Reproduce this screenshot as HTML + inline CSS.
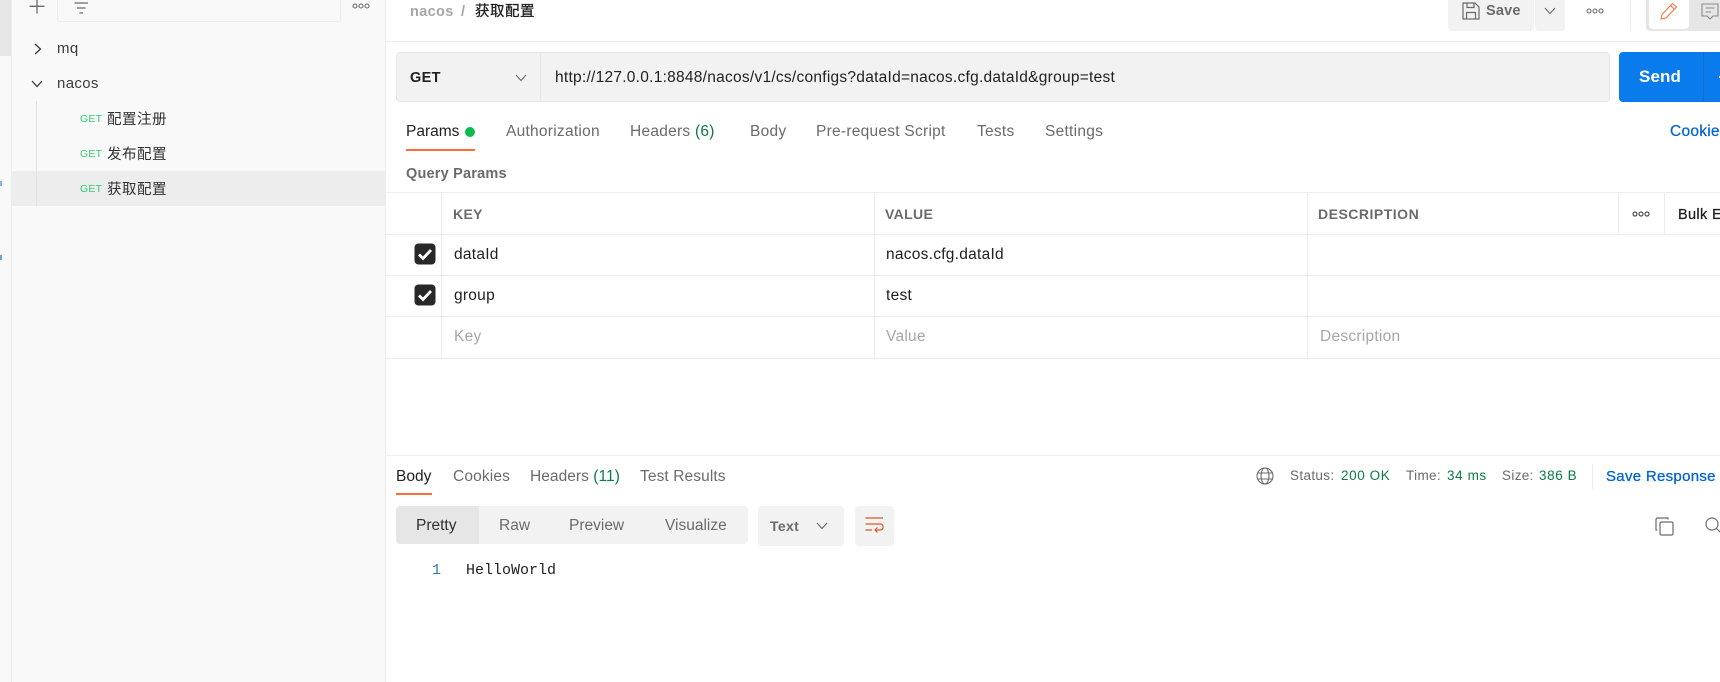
<!DOCTYPE html>
<html><head><meta charset="utf-8">
<style>
html,body{margin:0;padding:0;width:1720px;height:682px;overflow:hidden;background:#fff}
body{position:relative;font-family:"Liberation Sans","Noto Sans CJK SC",sans-serif;font-size:15.5px;color:#212121}
.a{position:absolute}
.t{position:absolute;white-space:nowrap;line-height:20px;height:20px;letter-spacing:.26px}
.s{font-size:14.5px;letter-spacing:.35px}
.g{color:#6b6b6b}
.b{font-weight:700}
.n{color:#0a7c42}
.l{position:absolute;background:#ededed}
.ph{color:#a6a6a6}
svg{position:absolute;overflow:visible}
</style></head>
<body>
<!-- rail + sidebar -->
<div class="a" style="left:0;top:0;width:11px;height:682px;background:#f9f9f9"></div>
<div class="a" style="left:0;top:0;width:11px;height:56px;background:#e6e6e6"></div>
<div class="l" style="left:11px;top:0;width:1px;height:682px"></div>
<div class="a" style="left:0;top:181px;width:2px;height:5px;background:#7db4ee"></div>
<div class="a" style="left:0;top:255px;width:2px;height:5px;background:#6f9fe0"></div>
<div class="a" style="left:12px;top:0;width:373px;height:682px;background:#f9f9f9"></div>
<div class="l" style="left:385px;top:0;width:1px;height:682px"></div>
<svg style="left:29px;top:0" width="16" height="14" fill="none" stroke="#6b6b6b" stroke-width="1.3"><path d="M8 0V13.5M0.5 6.3H15.5"/></svg>
<div class="a" style="left:57px;top:-4px;width:282px;height:24px;border:1px solid #ededed;border-radius:3px"></div>
<svg style="left:74px;top:2px" width="16" height="12" fill="none" stroke="#6b6b6b" stroke-width="1.2"><path d="M0.5 1H14M3 6H11.5M5.5 11H9"/></svg>
<svg style="left:352px;top:3px" width="18" height="6" fill="none" stroke="#6b6b6b" stroke-width="1.1"><circle cx="3" cy="3" r="2"/><circle cx="9" cy="3" r="2"/><circle cx="15" cy="3" r="2"/></svg>
<svg style="left:34px;top:43px" width="8" height="12" fill="none" stroke="#3a3a3a" stroke-width="1.3"><path d="M1 1L6.5 6L1 11"/></svg>
<div class="t s" style="left:57px;top:39px;color:#3c3c3c;font-size:15px">mq</div>
<svg style="left:31px;top:80px" width="12" height="8" fill="none" stroke="#3a3a3a" stroke-width="1.3"><path d="M1 1L6 6.5L11 1"/></svg>
<div class="t s" style="left:57px;top:74px;color:#3c3c3c;font-size:15px">nacos</div>
<div class="a" style="left:12px;top:171px;width:373px;height:35px;background:#ededed"></div>
<div class="a" style="left:36px;top:101px;width:1px;height:105px;background:#e2e2e2"></div>
<div class="t" style="left:80px;top:109px;font-size:10.5px;color:#2ecc71;letter-spacing:.2px">GET</div>
<div class="t" style="left:107px;top:110px;font-size:14.5px;color:#303030;letter-spacing:.5px">配置注册</div>
<div class="t" style="left:80px;top:144px;font-size:10.5px;color:#2ecc71;letter-spacing:.2px">GET</div>
<div class="t" style="left:107px;top:145px;font-size:14.5px;color:#303030;letter-spacing:.5px">发布配置</div>
<div class="t" style="left:80px;top:179px;font-size:10.5px;color:#2ecc71;letter-spacing:.2px">GET</div>
<div class="t" style="left:107px;top:180px;font-size:14.5px;color:#303030;letter-spacing:.5px">获取配置</div>

<!-- top bar -->
<div class="t b s" style="left:410px;top:2px;color:#a6a6a6">nacos</div>
<div class="t b s" style="left:461px;top:2px;color:#a6a6a6">/</div>
<div class="t s" style="left:475px;top:2px;color:#212121;letter-spacing:.5px;-webkit-text-stroke:.3px #212121">获取配置</div>
<div class="a" style="left:1448px;top:-4px;width:86px;height:35px;background:#f2f2f2;border-radius:4px"></div>
<div class="a" style="left:1535px;top:-4px;width:30px;height:35px;background:#f2f2f2;border-radius:4px"></div>
<svg style="left:1462px;top:2px" width="18" height="18" fill="none" stroke="#6b6b6b" stroke-width="1.2"><path d="M1 1H13L17 5V17H1Z"/><path d="M5 1V5.5H12V1M4.5 17V10.5H13.5V17"/></svg>
<div class="t b s" style="left:1486px;top:1px;color:#6b6b6b;letter-spacing:.2px">Save</div>
<svg style="left:1544px;top:7px" width="12" height="8" fill="none" stroke="#6b6b6b" stroke-width="1.1"><path d="M1 1L6 6.5L11 1"/></svg>
<svg style="left:1586px;top:8px" width="18" height="6" fill="none" stroke="#6b6b6b" stroke-width="1.1"><circle cx="3" cy="3" r="2"/><circle cx="9" cy="3" r="2"/><circle cx="15" cy="3" r="2"/></svg>
<div class="l" style="left:1630px;top:0;width:1px;height:31px"></div>
<div class="a" style="left:1646px;top:-4px;width:80px;height:35px;background:#e6e6e6;border-radius:4px"></div>
<div class="a" style="left:1649px;top:-4px;width:40px;height:33px;background:#fff;border-radius:4px"></div>
<svg style="left:1660px;top:2px" width="18" height="18" fill="none" stroke="#ff6c37" stroke-width="1"><path d="M1 17L2 12.5L12.5 1.5L16.5 5L6 16Z"/><path d="M10.5 3.5L14.5 7.3"/></svg>
<svg style="left:1701px;top:3px" width="18" height="17" fill="none" stroke="#8a8a8a" stroke-width="1.1"><path d="M1 1H17V13H12L9 16L6 13H1Z"/><path d="M4.5 5H13.5M4.5 9H10"/></svg>
<div class="l" style="left:386px;top:41px;width:1334px;height:1px"></div>

<!-- URL bar -->
<div class="a" style="left:396px;top:52px;width:1212px;height:48px;background:#f2f2f2;border:1px solid #e6e6e6;border-radius:4px"></div>
<div class="a" style="left:540px;top:53px;width:1px;height:48px;background:#e6e6e6"></div>
<div class="t b s" style="left:410px;top:68px;color:#212121">GET</div>
<svg style="left:515px;top:74px" width="12" height="8" fill="none" stroke="#6b6b6b" stroke-width="1.1"><path d="M1 1L6 6.5L11 1"/></svg>
<div class="t" style="left:555px;top:68px">http://127.0.0.1:8848/nacos/v1/cs/configs?dataId=nacos.cfg.dataId&amp;group=test</div>
<div class="a" style="left:1619px;top:52px;width:110px;height:50px;background:#097bed;border-radius:4px"></div>
<div class="a" style="left:1703px;top:52px;width:1px;height:50px;background:#0a6fd6"></div>
<div class="t b" style="left:1639px;top:67px;color:#fff;font-size:17px;letter-spacing:.1px">Send</div>
<div class="a" style="left:1719px;top:76px;width:1px;height:2px;background:#fff"></div>

<!-- tabs -->
<div class="t" style="left:406px;top:122px;color:#212121;letter-spacing:0">Params</div>
<div class="a" style="left:465px;top:127px;width:10px;height:10px;border-radius:50%;background:#0cbb52"></div>
<div class="a" style="left:406px;top:149px;width:69px;height:2px;background:#ff6c37"></div>
<div class="t g" style="left:506px;top:122px">Authorization</div>
<div class="t g" style="left:630px;top:122px">Headers <span class="n">(6)</span></div>
<div class="t g" style="left:750px;top:122px">Body</div>
<div class="t g" style="left:816px;top:122px">Pre-request Script</div>
<div class="t g" style="left:977px;top:122px">Tests</div>
<div class="t g" style="left:1045px;top:122px">Settings</div>
<div class="t" style="left:1670px;top:122px;color:#0265d2;-webkit-text-stroke:.25px #0265d2">Cookies</div>
<div class="t b g" style="left:406px;top:164px;font-size:14.5px;letter-spacing:.2px">Query Params</div>

<!-- table -->
<div class="l" style="left:386px;top:192px;width:1334px;height:1px"></div>
<div class="l" style="left:386px;top:234px;width:1334px;height:1px"></div>
<div class="l" style="left:386px;top:275px;width:1334px;height:1px"></div>
<div class="l" style="left:386px;top:316px;width:1334px;height:1px"></div>
<div class="l" style="left:386px;top:358px;width:1334px;height:1px"></div>
<div class="l" style="left:441px;top:193px;width:1px;height:165px"></div>
<div class="l" style="left:874px;top:193px;width:1px;height:165px"></div>
<div class="l" style="left:1307px;top:193px;width:1px;height:165px"></div>
<div class="l" style="left:1618px;top:193px;width:1px;height:41px"></div>
<div class="l" style="left:1664px;top:193px;width:1px;height:41px"></div>
<div class="t b g" style="left:453px;top:204px;font-size:14px;letter-spacing:.35px">KEY</div>
<div class="t b g" style="left:885px;top:204px;font-size:14px;letter-spacing:.35px">VALUE</div>
<div class="t b g" style="left:1318px;top:204px;font-size:14px;letter-spacing:.5px">DESCRIPTION</div>
<svg style="left:1632px;top:211px" width="18" height="6" fill="none" stroke="#505050" stroke-width="1.2"><circle cx="3" cy="3" r="2"/><circle cx="9" cy="3" r="2"/><circle cx="15" cy="3" r="2"/></svg>
<div class="t s" style="left:1678px;top:205px;-webkit-text-stroke:.25px #212121">Bulk Edit</div>
<svg style="left:414px;top:243px" width="22" height="22"><rect x=".5" y=".5" width="21" height="21" rx="4" fill="#282828"/><path d="M5 11.5L9 15.5L17 7" fill="none" stroke="#fff" stroke-width="2.8"/></svg>
<svg style="left:414px;top:284px" width="22" height="22"><rect x=".5" y=".5" width="21" height="21" rx="4" fill="#282828"/><path d="M5 11.5L9 15.5L17 7" fill="none" stroke="#fff" stroke-width="2.8"/></svg>
<div class="t" style="left:454px;top:245px">dataId</div>
<div class="t" style="left:886px;top:245px">nacos.cfg.dataId</div>
<div class="t" style="left:454px;top:286px">group</div>
<div class="t" style="left:886px;top:286px">test</div>
<div class="t ph" style="left:454px;top:327px">Key</div>
<div class="t ph" style="left:886px;top:327px">Value</div>
<div class="t ph" style="left:1320px;top:327px">Description</div>

<!-- response -->
<div class="l" style="left:386px;top:455px;width:1334px;height:1px"></div>
<div class="t" style="left:396px;top:467px;letter-spacing:0">Body</div>
<div class="a" style="left:396px;top:493px;width:36px;height:2px;background:#ff6c37"></div>
<div class="t g" style="left:453px;top:467px;letter-spacing:.15px">Cookies</div>
<div class="t g" style="left:530px;top:467px;letter-spacing:.05px">Headers <span class="n">(11)</span></div>
<div class="t g" style="left:640px;top:467px;letter-spacing:.1px">Test Results</div>
<svg style="left:1256px;top:467px" width="18" height="18" fill="none" stroke="#6b6b6b" stroke-width="1.1"><circle cx="9" cy="9" r="8"/><ellipse cx="9" cy="9" rx="4" ry="8"/><path d="M1.5 6H16.5M1.5 12H16.5"/></svg>
<div class="t g" style="left:1290px;top:466px;font-size:13.5px;letter-spacing:.35px">Status:</div>
<div class="t n" style="left:1341px;top:466px;font-size:13.5px;letter-spacing:.6px">200 OK</div>
<div class="t g" style="left:1406px;top:466px;font-size:13.5px;letter-spacing:.35px">Time:</div>
<div class="t n" style="left:1447px;top:466px;font-size:13.5px;letter-spacing:.6px">34 ms</div>
<div class="t g" style="left:1502px;top:466px;font-size:13.5px;letter-spacing:.35px">Size:</div>
<div class="t n" style="left:1539px;top:466px;font-size:13.5px;letter-spacing:.6px">386 B</div>
<div class="l" style="left:1592px;top:464px;width:1px;height:25px"></div>
<div class="t s" style="left:1606px;top:467px;font-size:15px;letter-spacing:.3px;color:#0265d2;-webkit-text-stroke:.3px #0265d2">Save Response</div>

<div class="a" style="left:396px;top:506px;width:352px;height:38px;background:#f2f2f2;border-radius:4px"></div>
<div class="a" style="left:396px;top:506px;width:83px;height:38px;background:#e6e6e6;border-radius:4px 0 0 4px"></div>
<div class="t" style="left:416px;top:516px;color:#303030;letter-spacing:0">Pretty</div>
<div class="t g" style="left:499px;top:516px;letter-spacing:0">Raw</div>
<div class="t g" style="left:569px;top:516px;letter-spacing:0">Preview</div>
<div class="t g" style="left:665px;top:516px;letter-spacing:0">Visualize</div>
<div class="a" style="left:758px;top:506px;width:86px;height:40px;background:#f2f2f2;border-radius:4px"></div>
<div class="t b g" style="left:770px;top:516px;font-size:14px;letter-spacing:.35px">Text</div>
<svg style="left:816px;top:522px" width="12" height="8" fill="none" stroke="#6b6b6b" stroke-width="1.1"><path d="M1 1L6 6.5L11 1"/></svg>
<div class="a" style="left:855px;top:506px;width:39px;height:40px;background:#f2f2f2;border-radius:4px"></div>
<svg style="left:865px;top:517px" width="19" height="18" fill="none" stroke="#d9572a" stroke-width="1.2"><path d="M0.5 1H18M0.5 7H15.5C19 7 19 13 15.5 13H10M0.5 13H7M12.5 10.5L10 13L12.5 15.5"/></svg>
<div class="t" style="left:432px;top:561px;color:#2f7aa8;font-family:'Liberation Mono',monospace;font-size:15px;letter-spacing:0">1</div>
<div class="t" style="left:466px;top:561px;color:#212121;font-family:'Liberation Mono',monospace;font-size:15px;letter-spacing:0">HelloWorld</div>
<svg style="left:1655px;top:517px" width="19" height="19" fill="none" stroke="#6b6b6b" stroke-width="1.2"><rect x="5" y="5" width="13" height="13" rx="1.5"/><path d="M2.5 13H1V2.5A1.5 1.5 0 0 1 2.5 1H13V2.5"/></svg>
<svg style="left:1705px;top:517px" width="17" height="17" fill="none" stroke="#6b6b6b" stroke-width="1.2"><circle cx="7" cy="7" r="6"/><path d="M11.5 11.5L16 16"/></svg>
</body></html>
